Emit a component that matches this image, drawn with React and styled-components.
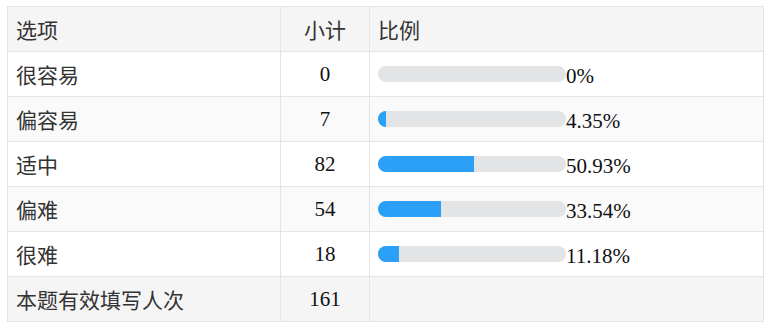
import React from "react";
import styled, { createGlobalStyle } from "styled-components";

const Global = createGlobalStyle`
  html, body { margin: 0; padding: 0; background: #fff; }
  body { font-family: "Liberation Serif", "Noto Sans CJK SC", serif; }
`;

const Wrap = styled.div`
  padding: 6px 9px 0 7px;
`;

const Table = styled.table`
  width: 757px;
  border-collapse: collapse;
  table-layout: fixed;
  font-size: 21px;
  color: #333;
`;

const Row = styled.tr`
  height: 45px;
  background: ${(p) => (p.$shade ? "#f5f5f5" : p.$stripe ? "#fafafa" : "#fff")};
`;

const Cell = styled.td`
  border: 1px solid #e4e4e4;
  padding: 0 8px;
  vertical-align: middle;
  text-align: ${(p) => p.$align || "left"};
  white-space: nowrap;
`;

const HeadCell = styled(Cell).attrs({ as: "th" })`
  font-weight: normal;
`;

const Num = styled.span`
  color: #111;
`;

const BarLine = styled.div`
  display: flex;
  align-items: center;
`;

const Track = styled.div`
  width: 188px;
  height: 16px;
  border-radius: 8px;
  background: #e3e4e6;
  overflow: hidden;
  flex: none;
`;

const Fill = styled.div`
  height: 100%;
  background: #2c9ff6;
`;

const Pct = styled.span`
  color: #111;
  line-height: 1;
  padding-top: 4px;
`;

const data = [
  { label: "很容易", n: 0, p: 0, t: "0%" },
  { label: "偏容易", n: 7, p: 4.35, t: "4.35%" },
  { label: "适中", n: 82, p: 50.93, t: "50.93%" },
  { label: "偏难", n: 54, p: 33.54, t: "33.54%" },
  { label: "很难", n: 18, p: 11.18, t: "11.18%" },
];

export default function App() {
  return (
    <Wrap>
      <Global />
      <Table>
        <colgroup>
          <col style={{ width: 273 }} />
          <col style={{ width: 89 }} />
          <col />
        </colgroup>
        <thead>
          <Row $shade>
            <HeadCell>选项</HeadCell>
            <HeadCell $align="center">小计</HeadCell>
            <HeadCell>比例</HeadCell>
          </Row>
        </thead>
        <tbody>
          {data.map((d, i) => (
            <Row key={d.label} $stripe={i % 2 === 1}>
              <Cell>{d.label}</Cell>
              <Cell $align="center"><Num>{d.n}</Num></Cell>
              <Cell>
                <BarLine>
                  <Track>
                    <Fill style={{ width: `${d.p}%` }} />
                  </Track>
                  <Pct>{d.t}</Pct>
                </BarLine>
              </Cell>
            </Row>
          ))}
          <Row $shade>
            <Cell>本题有效填写人次</Cell>
            <Cell $align="center"><Num>161</Num></Cell>
            <Cell />
          </Row>
        </tbody>
      </Table>
    </Wrap>
  );
}
